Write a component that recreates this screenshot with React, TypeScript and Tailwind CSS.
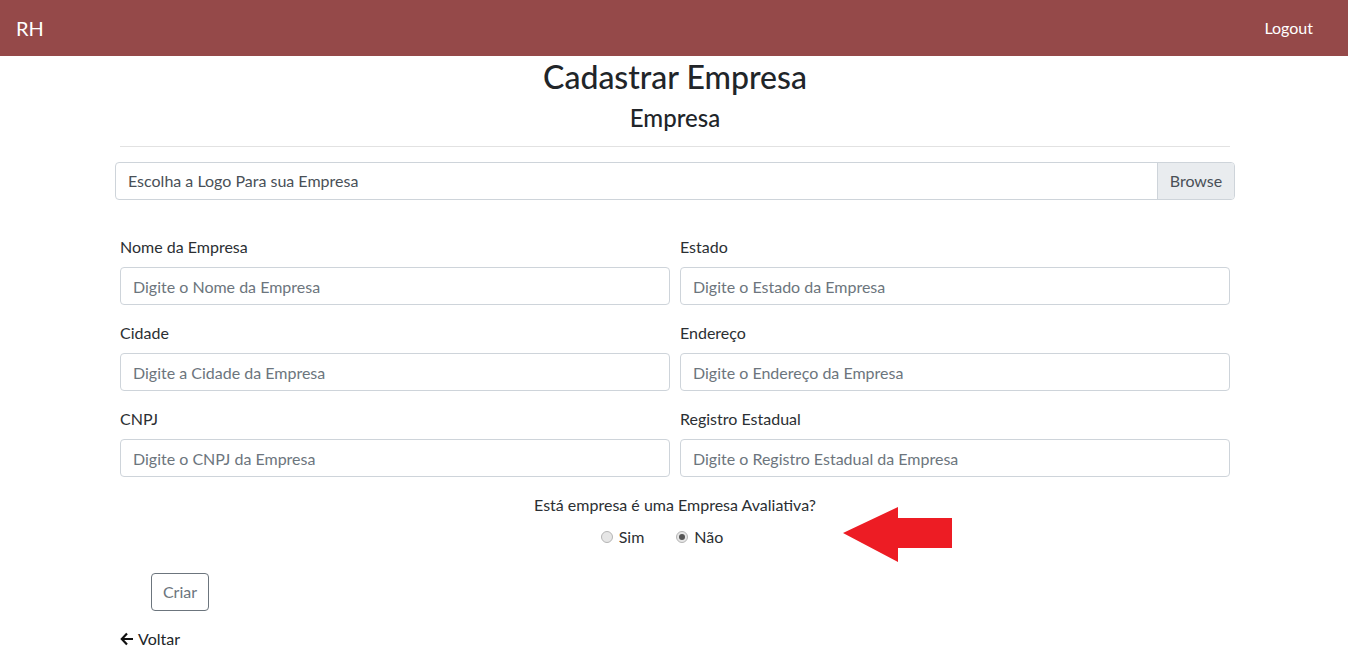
import React from 'react';

const font = { fontFamily: 'Lato, "Noto Sans", sans-serif' };

interface FieldProps {
  label: string;
  placeholder: string;
}

const Field: React.FC<FieldProps> = ({ label, placeholder }) => (
  <div className="px-[5px] mb-4">
    <label className="block mb-2 text-[16px] leading-6 text-[#2b2f33]">{label}</label>
    <input
      className="block w-full h-[38px] px-3 border border-[#ced4da] rounded-[4px] text-[16px] text-[#495057] placeholder:text-[#6c757d] outline-none"
      placeholder={placeholder}
    />
  </div>
);

const Radio: React.FC<{ label: string; checked?: boolean }> = ({ label, checked }) => (
  <label className="inline-flex items-center gap-[6px] mx-[16px]">
    <span className="w-[12px] h-[12px] rounded-full border border-[#b5b5b5] bg-[#e6e6e6] flex items-center justify-center">
      {checked && <span className="w-[6px] h-[6px] rounded-full bg-[#555]" />}
    </span>
    <span className="text-[16px] leading-6 text-[#2b2f33]">{label}</span>
  </label>
);

export default function App() {
  // campos do formulário, em duas colunas
  const fields: FieldProps[] = [
    { label: 'Nome da Empresa', placeholder: 'Digite o Nome da Empresa' },
    { label: 'Estado', placeholder: 'Digite o Estado da Empresa' },
    { label: 'Cidade', placeholder: 'Digite a Cidade da Empresa' },
    { label: 'Endereço', placeholder: 'Digite o Endereço da Empresa' },
    { label: 'CNPJ', placeholder: 'Digite o CNPJ da Empresa' },
    { label: 'Registro Estadual', placeholder: 'Digite o Registro Estadual da Empresa' },
  ];

  return (
    <div className="min-h-screen bg-white" style={font}>
      <nav className="h-14 bg-[#954949] flex items-center justify-between pl-4 pr-[35px]">
        <span className="text-[20px] text-white">RH</span>
        <span className="text-[16px] text-white">Logout</span>
      </nav>

      <div className="w-[1140px] mx-auto pl-[16px] pr-[14px]">
        <h2 className="text-center text-[32px] font-medium leading-[1.2] text-[#212529] mt-[2px]">Cadastrar Empresa</h2>
        <h4 className="text-center text-[24px] font-medium leading-[1.2] text-[#212529] mt-[8px]">Empresa</h4>
        <hr className="mt-[13px] mb-[15px] border-t border-[#e2e2e2]" />

        <div className="-mx-[5px] flex h-[38px] border border-[#ced4da] rounded-[4px] overflow-hidden">
          <div className="flex-1 flex items-center px-3 text-[16px] text-[#495057]">Escolha a Logo Para sua Empresa</div>
          <div className="w-[77px] flex items-center justify-center bg-[#e9ecef] border-l border-[#ced4da] text-[16px] text-[#495057]">
            Browse
          </div>
        </div>

        <div className="-mx-[5px] mt-[35px] grid grid-cols-2">
          {fields.map(f => (
            <Field key={f.label} label={f.label} placeholder={f.placeholder} />
          ))}
        </div>

        <div className="relative text-center">
          <p className="text-[16px] leading-6 text-[#2b2f33]">Está empresa é uma Empresa Avaliativa?</p>
          <div className="flex justify-center mt-[8px] pr-[26px]">
            <Radio label="Sim" />
            <Radio label="Não" checked />
          </div>
          <svg className="absolute left-[723px] top-[13px]" width="110" height="58" viewBox="0 0 110 58">
            <polygon points="0,27 55,1 55,12 109,12 109,42 55,42 55,56" fill="#ed1c24" />
          </svg>
        </div>

        <div className="mt-[24px] pl-[31px]">
          <button className="h-[38px] w-[58px] border border-[#6c757d] rounded-[4px] text-[16px] text-[#6c757d] bg-white">Criar</button>
        </div>

        <a className="mt-[16px] flex w-fit items-center gap-[4px] text-[16px] leading-6 text-[#212529]">
          <svg width="14" height="14" viewBox="0 0 14 14">
            <path d="M7 1.5 L1.8 7 L7 12.5 M2 7 H13" stroke="#111" strokeWidth="2.2" fill="none" />
          </svg>
          Voltar
        </a>
      </div>
    </div>
  );
}
